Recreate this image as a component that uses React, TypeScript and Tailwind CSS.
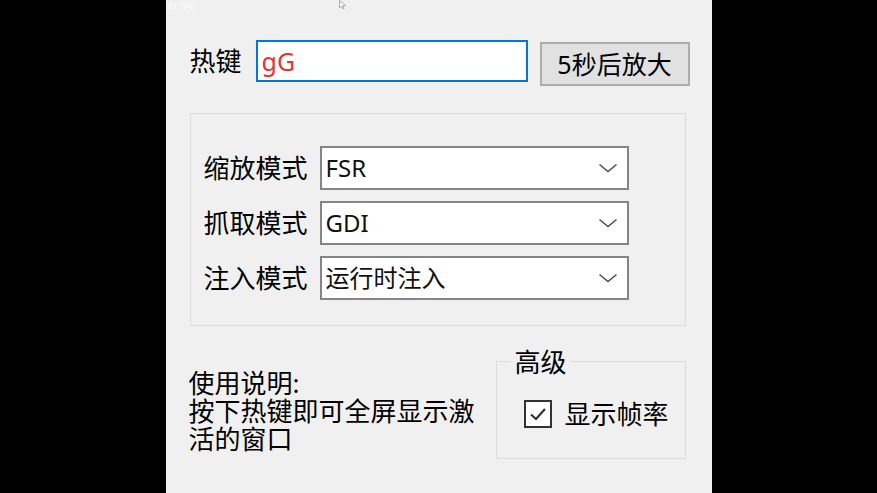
const font = { fontFamily: '"Noto Sans", "Noto Sans CJK SC", sans-serif' }

const modes = [
  { label: '缩放模式', value: 'FSR' },
  { label: '抓取模式', value: 'GDI' },
  { label: '注入模式', value: '运行时注入' },
]

const helpLines = ['使用说明:', '按下热键即可全屏显示激', '活的窗口']

function Chevron() {
  return (
    <svg width="20" height="10" viewBox="0 0 20 10" className="shrink-0">
      <path d="M1.5 1.5 L10 8.5 L18.5 1.5" fill="none" stroke="#505050" strokeWidth="1.6" />
    </svg>
  )
}

function Combo({ value }: { value: string }) {
  return (
    <div className="flex h-[44px] w-[309px] items-center justify-between border-2 border-[#858585] bg-white pl-[4px] pr-[9px]">
      <span className="text-[24px] leading-none text-[#111]">{value}</span>
      <Chevron />
    </div>
  )
}

export default function App() {
  return (
    <div className="flex h-[493px] w-full justify-center overflow-hidden bg-black" style={font}>
      <div className="relative h-[493px] w-[546px] shrink-0 bg-[#f0f0f0] pl-[24px] pt-[40px] text-black">
        {/* fps overlay + cursor */}
        <span className="absolute left-[3px] top-[3px] text-[8px] leading-none text-white/80">61 FPS</span>
        <svg className="absolute left-[173px] top-0" width="8" height="10" viewBox="0 0 8 10">
          <path d="M0.5 0.5 L0.5 8 L2.5 6 L4 9 L5 8.5 L3.8 5.6 L6.5 5.6 Z" fill="#fff" stroke="#999" strokeWidth="0.8" />
        </svg>

        <div className="flex items-start">
          <span className="mt-[5px] w-[66px] text-[26px] leading-[32px]">热键</span>
          <div className="flex h-[42px] w-[272px] items-center border-2 border-[#0078d7] bg-white pl-[4px]">
            <span className="text-[25px] leading-none text-[#f03030]">gG</span>
          </div>
          <button className="ml-[12px] mt-[2px] h-[44px] w-[150px] border-2 border-[#adadad] bg-[#e1e1e1] text-[25px] leading-none">
            5秒后放大
          </button>
        </div>

        <div className="mt-[27px] flex h-[213px] w-[496px] flex-col gap-[11px] border border-[#dcdcdc] pl-[13px] pt-[32px]">
          {modes.map((m) => (
            <div key={m.label} className="flex items-center">
              <span className="w-[116px] text-[26px] leading-none">{m.label}</span>
              <Combo value={m.value} />
            </div>
          ))}
        </div>

        <div className="mt-[35px] flex items-start">
          <div className="-ml-[1px] mt-[9px] flex w-[307px] flex-col gap-[2px]">
            {helpLines.map((line) => (
              <span key={line} className="text-[26px] leading-[26px]">
                {line}
              </span>
            ))}
          </div>
          <div className="relative h-[98px] w-[190px] border border-[#dcdcdc]">
            <span className="absolute -top-[14px] left-[14px] bg-[#f0f0f0] px-[4px] text-[26px] leading-[28px]">
              高级
            </span>
            <div className="ml-[27px] mt-[38px] flex items-center">
              <div className="flex h-[28px] w-[28px] items-center justify-center border-2 border-[#333] bg-white">
                <svg width="18" height="14" viewBox="0 0 18 14">
                  <path d="M2 7.5 L7 12 L16 2" fill="none" stroke="#333" strokeWidth="2.2" />
                </svg>
              </div>
              <span className="ml-[13px] text-[26px] leading-none">显示帧率</span>
            </div>
          </div>
        </div>
      </div>
    </div>
  )
}
